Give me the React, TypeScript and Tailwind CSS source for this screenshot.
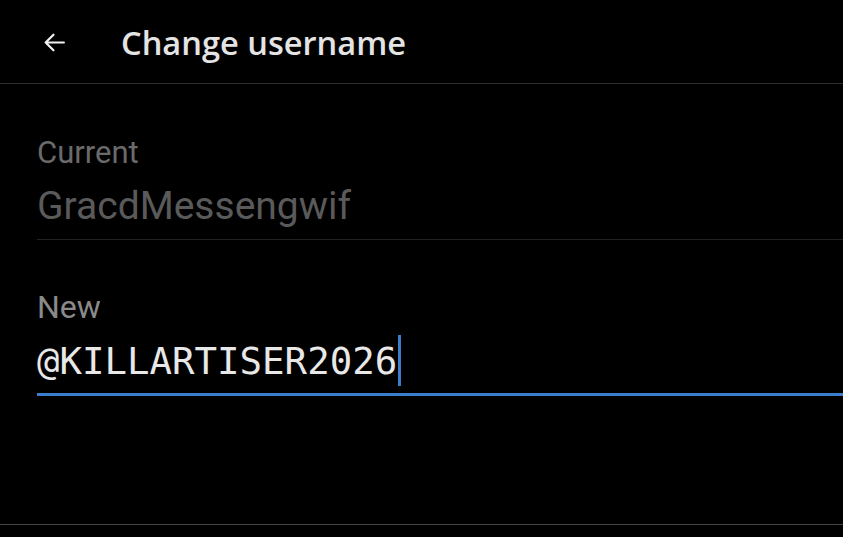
import React from "react";

export default function App() {
  return (
    <div className="w-[843px] h-[537px] bg-black overflow-hidden flex flex-col" style={{ fontFamily: "Roboto, 'Noto Sans', sans-serif" }}>
      <div className="h-[84px] flex items-center border-b border-[#2e2e2e] shrink-0">
        <svg className="ml-[42px] mt-[1px]" width="25" height="25" viewBox="0 0 24 24" fill="none" stroke="#f2f2f2" strokeWidth="2.1" strokeLinecap="round" strokeLinejoin="round">
          <path d="M21 12H3.5M11 4.5L3.5 12l7.5 7.5" />
        </svg>
        <div className="ml-[54px] mt-[4px] text-[32.6px] font-semibold text-[#e4e4e4] leading-none" style={{ fontFamily: "'Open Sans', Roboto, sans-serif" }}>Change username</div>
      </div>
      <div className="pl-[37px] flex flex-col">
        <div className="mt-[54px] text-[31px] leading-[30px] text-[#6a6a6a]">Current</div>
        <div className="mt-[18px] text-[39px] leading-[40px] text-[#5a5a5a]">GracdMessengwif</div>
        <div className="mt-[13px] h-px bg-[#222222]" />
        <div className="mt-[52px] text-[32px] leading-[30px] text-[#8a8a8a]">New</div>
        <div className="mt-[13px] flex items-center">
          <span className="text-[37.4px] leading-[46px] text-[#e8e8e8]" style={{ fontFamily: "'DejaVu Sans Mono', monospace" }}>@KILLARTISER2026</span>
          <span className="w-[3px] h-[51px] bg-[#3b7fcc] ml-[1px]" />
        </div>
        <div className="mt-[7px] h-[3px] bg-[#3b7fcc]" />
      </div>
      <div className="mt-auto mb-[12px] h-px bg-[#444444]" />
    </div>
  );
}
